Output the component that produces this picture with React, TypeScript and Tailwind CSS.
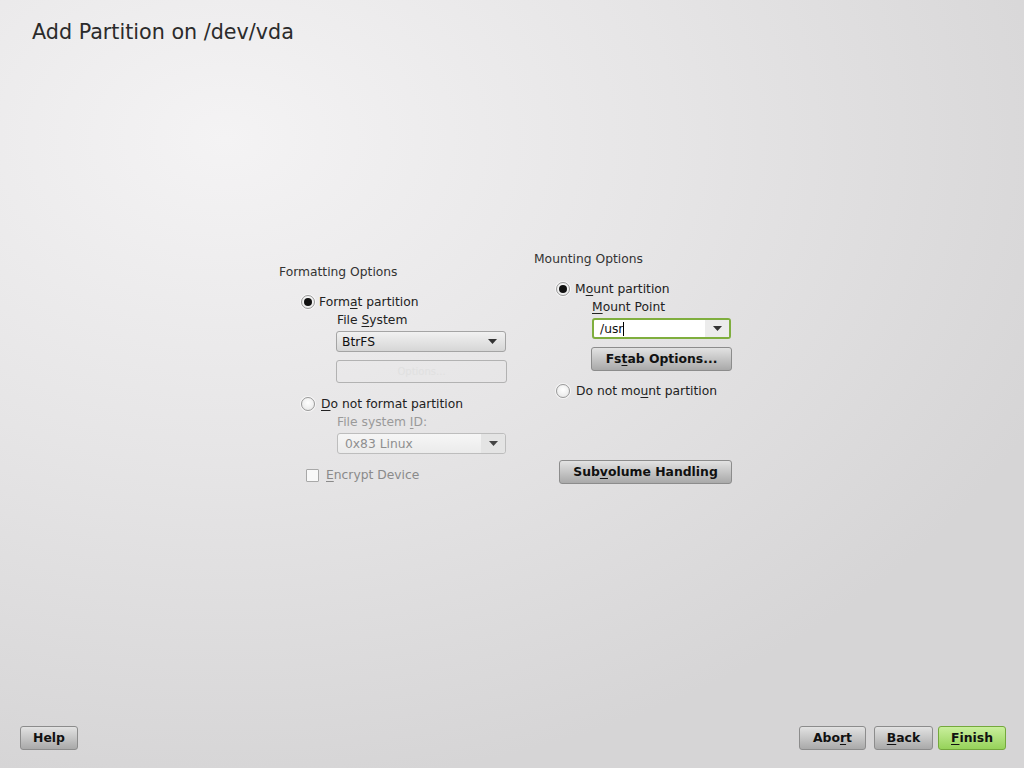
import React from "react";

const font = { fontFamily: '"DejaVu Sans", "Liberation Sans", sans-serif' };

function U({ children }: { children: React.ReactNode }) {
  return <span className="underline underline-offset-[2px] decoration-[1px]">{children}</span>;
}

function Radio({ checked }: { checked?: boolean }) {
  return (
    <span className="w-[14px] h-[14px] rounded-full border border-[#9a9a9a] bg-[radial-gradient(circle_at_50%_40%,#ffffff,#e4e4e4)] flex items-center justify-center shrink-0 shadow-[0_0_0_1px_rgba(255,255,255,0.6)]">
      {checked && <span className="w-[8px] h-[8px] rounded-full bg-[#111]" />}
    </span>
  );
}

function Arrow({ color = "#333" }: { color?: string }) {
  return (
    <svg width="9" height="5" viewBox="0 0 9 5">
      <path d="M0 0 L9 0 L4.5 5 Z" fill={color} />
    </svg>
  );
}

function Btn({
  children,
  className = "",
  green,
}: {
  children: React.ReactNode;
  className?: string;
  green?: boolean;
}) {
  return (
    <div
      className={
        "h-[24px] rounded-[3px] border flex items-center justify-center font-bold text-[12.4px] text-[#111] " +
        (green
          ? "border-[#74a83c] bg-[linear-gradient(#c9ef9c,#96d25a)] "
          : "border-[#8c8c8c] bg-[linear-gradient(#e2e2e2,#a9a9a9)] ") +
        className
      }
    >
      {children}
    </div>
  );
}

export default function App() {
  return (
    <div
      style={font}
      className="w-[1024px] h-[768px] flex flex-col text-[#222] bg-[radial-gradient(ellipse_900px_650px_at_22%_18%,#f4f3f4,#e6e5e6_50%,#d6d5d6)] overflow-hidden"
    >
      <div className="pl-[32px] pt-[19px] h-[60px] text-[20.7px] leading-[26px] text-[#2b2b2b]">
        Add Partition on /dev/vda
      </div>

      <div className="flex-1 flex pl-[279px] pt-[191px] text-[12.3px] leading-[16px]">
        {/* Left column */}
        <div className="w-[255px] flex flex-col pt-[13px]">
          <div className="text-[#333]">Formatting Options</div>
          <div className="mt-[14px] flex items-center gap-[4px] pl-[22px]">
            <Radio checked />
            <span>
              Form<U>a</U>t partition
            </span>
          </div>
          <div className="pl-[58px] mt-[2px]">
            File <U>S</U>ystem
          </div>
          <div className="ml-[57px] mt-[3px] w-[170px] h-[21px] rounded-[3px] border border-[#a4a4a4] bg-[linear-gradient(#f1f1f1,#d6d6d6)] flex items-center justify-between pl-[5px] pr-[8px] text-[#111]">
            <span>BtrFS</span>
            <Arrow />
          </div>
          <div className="ml-[57px] mt-[8px] w-[171px] h-[23px] rounded-[3px] border border-[#b2b2b2] flex items-center justify-center text-[10px] text-[#e0e0e0]">
            Options...
          </div>
          <div className="mt-[13px] flex items-center gap-[6px] pl-[22px]">
            <Radio />
            <span>
              <U>D</U>o not format partition
            </span>
          </div>
          <div className="pl-[58px] mt-[2px] text-[#9a9a9a]">
            File system <U>I</U>D:
          </div>
          <div className="ml-[58px] mt-[3px] w-[169px] h-[21px] rounded-[3px] border border-[#bdbdbd] bg-[linear-gradient(#f6f6f6,#ebebeb)] flex items-center pl-[7px] text-[#8e8e8e]">
            <span className="flex-1">0x83 Linux</span>
            <span className="w-[24px] h-full flex items-center justify-center bg-[#e4e4e4] rounded-r-[3px]">
              <Arrow color="#444" />
            </span>
          </div>
          <div className="mt-[13px] flex items-center gap-[7px] pl-[27px]">
            <span className="w-[13px] h-[13px] border border-[#a8a8a8] bg-[#f8f8f8] rounded-[1px]" />
            <span className="text-[#8a8a8a]">
              <U>E</U>ncrypt Device
            </span>
          </div>
        </div>

        {/* Right column */}
        <div className="w-[200px] flex flex-col">
          <div className="text-[#333]">Mounting Options</div>
          <div className="mt-[14px] flex items-center gap-[5px] pl-[22px]">
            <Radio checked />
            <span>
              M<U>o</U>unt partition
            </span>
          </div>
          <div className="pl-[58px] mt-[2px]">
            <U>M</U>ount Point
          </div>
          <div className="ml-[58px] mt-[3px] w-[139px] h-[21px] rounded-[3px] border-[2px] border-[#7fae3e] bg-white flex items-center pl-[6px] text-[#111]">
            <span className="flex-1 flex items-center">
              /usr<span className="w-px h-[14px] bg-black" />
            </span>
            <span className="w-[24px] h-full flex items-center justify-center bg-[#ececec]">
              <Arrow />
            </span>
          </div>
          <Btn className="ml-[57px] mt-[8px] w-[141px]">
            Fs<U>t</U>ab Options...
          </Btn>
          <div className="mt-[12px] flex items-center gap-[6px] pl-[22px]">
            <Radio />
            <span>
              Do not mo<U>u</U>nt partition
            </span>
          </div>
          <Btn className="ml-[25px] mt-[61px] w-[173px]">
            Sub<U>v</U>olume Handling
          </Btn>
        </div>
      </div>

      <div className="h-[42px] flex items-start px-[18px] pl-[20px]">
        <Btn className="w-[58px]">Help</Btn>
        <div className="flex-1" />
        <Btn className="w-[67px]">
          Abo<U>r</U>t
        </Btn>
        <Btn className="w-[59px] ml-[8px]">
          <U>B</U>ack
        </Btn>
        <Btn green className="w-[68px] ml-[5px]">
          <U>F</U>inish
        </Btn>
      </div>
    </div>
  );
}
